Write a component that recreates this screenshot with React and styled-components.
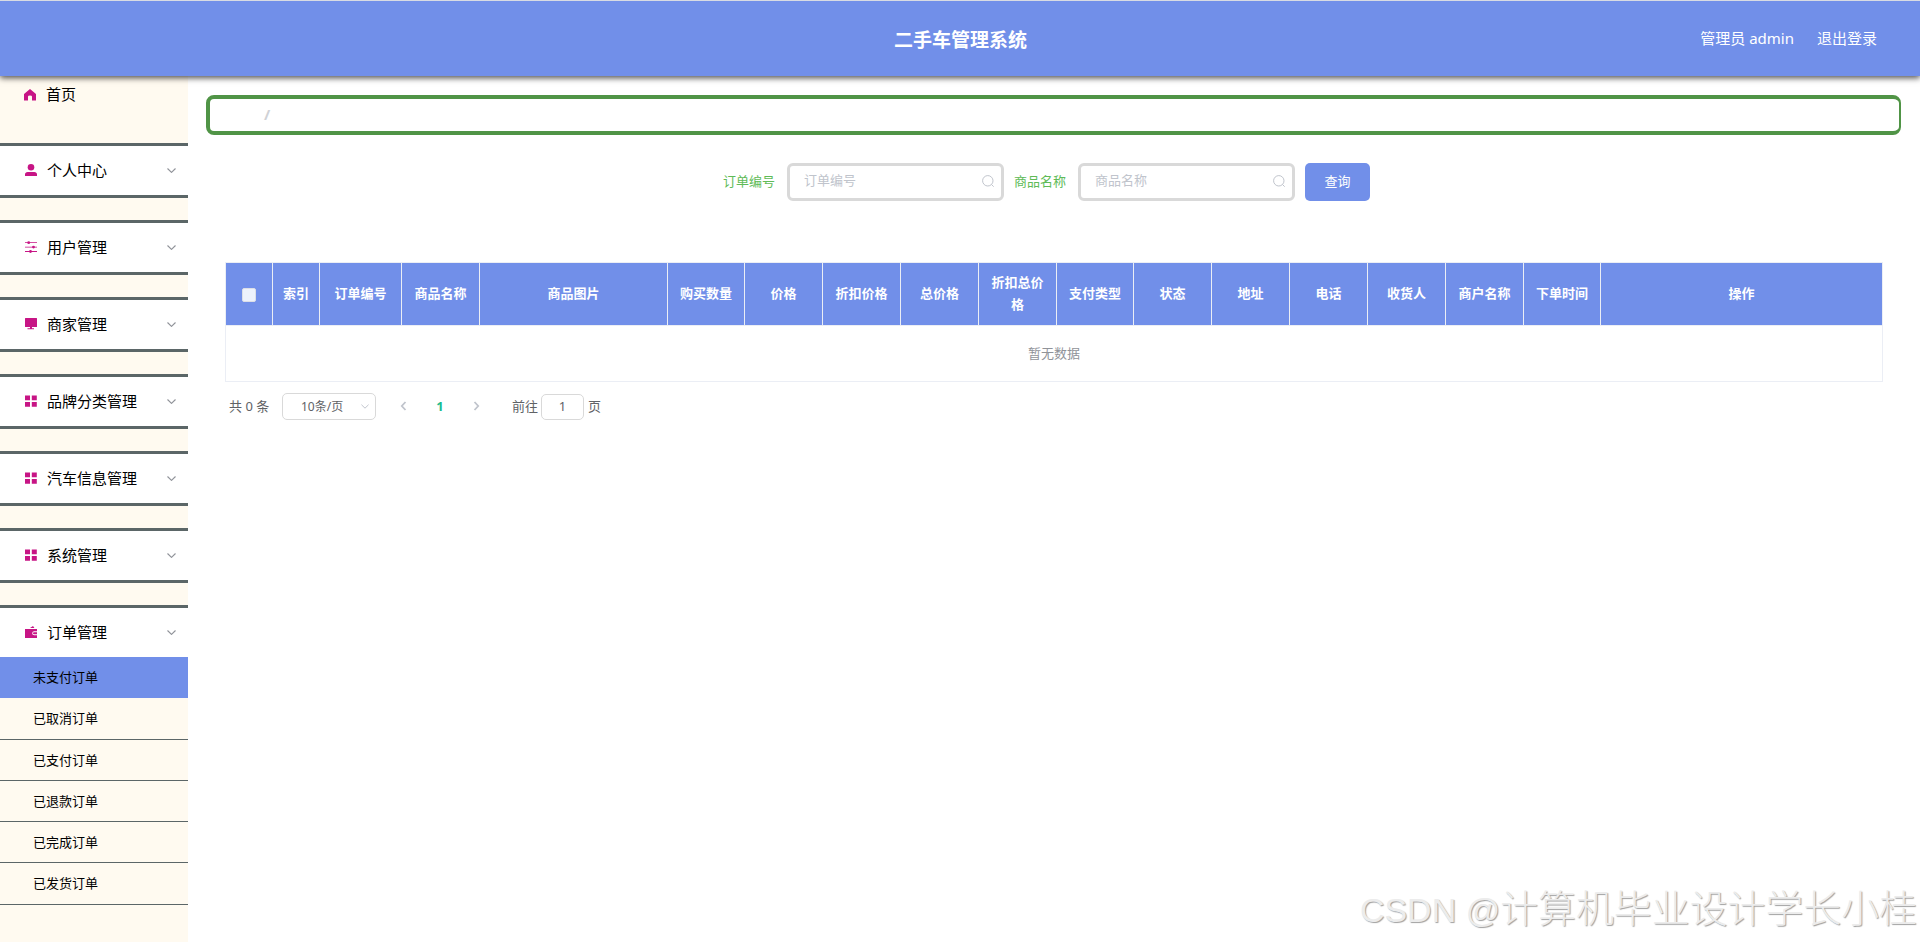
import React, { useState } from 'react';
import styled, { createGlobalStyle } from 'styled-components';

const GlobalStyle = createGlobalStyle`
  * {
    box-sizing: border-box;
  }

  body {
    margin: 0;
    background: #fff;
    font-family: 'Noto Sans', 'Noto Sans CJK SC', sans-serif;
    overflow: hidden;
  }

  input, button {
    font-family: inherit;
  }
`;

const Page = styled.div`
  height: 942px;
  display: flex;
  flex-direction: column;
  overflow: hidden;
`;

const Header = styled.header`
  flex: none;
  height: 76px;
  display: grid;
  grid-template-columns: 1fr auto 1fr;
  align-items: center;
  padding: 0 43px 0 44px;
  border-top: 1px solid #d8dbe3;
  background: #718fe9;
  color: #fff;
  box-shadow: 0 2px 6px rgba(0, 0, 0, 0.7);
  z-index: 1;
`;

const Title = styled.h1`
  grid-column: 2;
  margin: 0;
  padding-top: 2px;
  font-size: 19px;
  line-height: 30px;
  font-weight: 700;
`;

const UserBar = styled.div`
  display: flex;
  justify-content: flex-end;
  gap: 23px;
  font-size: 15px;
  line-height: 24px;
  padding-bottom: 2px;
`;

const Body = styled.div`
  flex: 1;
  display: flex;
  min-height: 0;
`;

const Sidebar = styled.nav`
  flex: none;
  width: 188px;
  background: #fffaf0;
  color: #000;
`;

const HomeItem = styled.div`
  height: 67px;
  padding: 6px 0 0 24px;
  display: flex;
  align-items: flex-start;
  gap: 10px;
  font-size: 15px;
  line-height: 24px;

  svg {
    margin-top: 7px;
  }
`;

const MenuItem = styled.div`
  height: ${(props) => (props.$open ? '52px' : '55px')};
  margin-bottom: ${(props) => (props.$open ? '0' : '22px')};
  padding: 0 12px 1px 25px;
  display: flex;
  align-items: center;
  border-top: 3px solid #5b6667;
  border-bottom: ${(props) => (props.$open ? 'none' : '3px solid #5b6667')};
  background: #fff;
  font-size: 15px;
  line-height: 24px;
  cursor: pointer;
`;

const MenuLabel = styled.span`
  flex: 1;
  padding-left: 10px;
`;

const SubItem = styled.div`
  height: ${(props) => props.$height}px;
  padding: 0 0 2px 33px;
  display: flex;
  align-items: center;
  font-size: 13px;
  color: #000;
  background: ${(props) => (props.$active ? '#718fe9' : 'transparent')};
  border-bottom: ${(props) => (props.$active ? 'none' : '1px solid #5b6667')};
  cursor: pointer;
`;

const Main = styled.main`
  flex: 1;
  min-width: 0;
  padding: 19px 19px 0 18px;
`;

const Breadcrumb = styled.div`
  height: 40px;
  padding: 0 0 2px 54px;
  display: flex;
  align-items: center;
  border: 4px solid #509446;
  border-right-width: 2px;
  border-radius: 8px;
  color: #d0d2d6;
  font-size: 15px;
  font-weight: 700;
`;

const Content = styled.section`
  padding: 28px 18px 0 19px;
`;

const SearchBar = styled.div`
  display: flex;
  align-items: center;
  height: 38px;
  padding-left: 498px;
`;

const Field = styled.label`
  display: flex;
  align-items: center;
  margin-right: 10px;
  color: #60bb57;
  font-size: 13px;
`;

const FieldName = styled.span`
  padding-bottom: 3px;
`;

const InputBox = styled.span`
  width: 217px;
  height: 38px;
  margin-left: 12px;
  padding: 0 7px 2px 14px;
  display: flex;
  align-items: center;
  border: 3px solid #d9d9d9;
  border-radius: 6px;
  background: #fff;
`;

const TextInput = styled.input`
  flex: 1;
  min-width: 0;
  padding: 0 0 2px;
  border: none;
  outline: none;
  background: transparent;
  color: #606266;
  font-size: 13px;

  &::placeholder {
    color: #c0c4cc;
  }
`;

const SearchButton = styled.button`
  width: 65px;
  height: 38px;
  padding: 0 0 4px;
  border: none;
  border-radius: 5px;
  background: #718fe9;
  color: #fff;
  font-size: 13px;
  cursor: pointer;
`;

const Table = styled.div`
  margin-top: 61px;
  border: 1px solid #ebeef5;
`;

const HeadRow = styled.div`
  height: 63px;
  display: grid;
  grid-template-columns: ${(props) => props.$columns};
  border-bottom: 1px solid #ebeef5;
`;

const HeadCell = styled.div`
  display: flex;
  align-items: center;
  justify-content: center;
  padding: 0 10px 2px;
  border-right: 1px solid #ebeef5;
  background: #718fe9;
  color: #fff;
  font-size: 13px;
  font-weight: 700;
  line-height: 22px;
  text-align: center;

  &:last-child {
    border-right: none;
  }
`;

const Checkbox = styled.span`
  width: 14px;
  height: 14px;
  margin-top: 3px;
  border: 1px solid #dcdfe6;
  border-radius: 2px;
  background: #edf2fc;
`;

const EmptyRow = styled.div`
  height: 55px;
  padding-bottom: 2px;
  display: flex;
  align-items: center;
  justify-content: center;
  color: #909399;
  font-size: 13px;
`;

const Pagination = styled.div`
  display: flex;
  align-items: center;
  height: 28px;
  margin-top: 11px;
  padding-left: 4px;
  color: #606266;
  font-size: 13px;
`;

const Total = styled.span`
  width: 53px;
  padding-bottom: 3px;
`;

const SizeSelect = styled.div`
  width: 94px;
  height: 27px;
  margin-bottom: 1px;
  padding: 0 6px 1px 18px;
  display: flex;
  align-items: center;
  justify-content: space-between;
  border: 1px solid #d9d9d9;
  border-radius: 5px;
  font-size: 12px;
`;

const Pager = styled.div`
  width: 136px;
  padding: 0 32px 2px 24px;
  display: flex;
  align-items: center;
  justify-content: space-between;
  color: #1bbc8f;
  font-weight: 700;
`;

const JumpText = styled.span`
  padding-bottom: 3px;
`;

const JumpInput = styled.input`
  width: 43px;
  height: 26px;
  margin: 0 4px 0 3px;
  padding: 0 0 2px;
  border: 1px solid #d9d9d9;
  border-radius: 5px;
  outline: none;
  color: #606266;
  font-size: 13px;
  text-align: center;
`;

const Watermark = styled.div`
  position: absolute;
  right: 3px;
  bottom: 9px;
  height: 54px;
  line-height: 54px;
  color: #ececec;
  font-family: 'Noto Sans CJK SC', sans-serif;
  font-size: 37.9px;
  font-weight: 300;
  white-space: pre;
  text-shadow: 1px 1px 1px #a0a0a0;
  z-index: 2;

  span {
    font-family: 'Liberation Sans', sans-serif;
    font-size: 34px;
  }
`;

const icons = {
  home: <path d="M6 0 12 5V11.5H8V7.5Q8 6.5 6 6.5T4 7.5V11.5H0V5Z" />,
  user: (
    <>
      <circle cx="6" cy="3.3" r="3.3" />
      <path d="M3.2 8h5.6A3 3 0 0 1 12 12H0A3 3 0 0 1 3.2 8Z" />
    </>
  ),
  sliders: (
    <>
      <path d="M0 1.3h12v.8H0zM0 5.7h12v.8H0zM0 10.1h12v.8H0z" />
      <circle cx="3.7" cy="1.7" r="1.4" />
      <circle cx="8.5" cy="6.1" r="1.4" />
      <circle cx="5.5" cy="10.5" r="1.4" />
    </>
  ),
  monitor: <path d="M.5 0h11q.5 0 .5.5V8.5q0 .5-.5.5H.5Q0 9 0 8.5V.5Q0 0 .5 0ZM5 9h2v1.2h2V11.3H2.5v-1.1H5Z" />,
  grid: <path d="M0 .5h5v4.8H0zM6.8.5h5v4.8h-5zM0 7h5v4.8H0zM6.8 7h5v4.8h-5z" />,
  wallet: (
    <path
      fillRule="evenodd"
      d="M0 3h12v2.2H9.2a2 2 0 0 0 0 4H12V12H0ZM5 2 8 0l1.4 2ZM9 6.2h3v2H9a1 1 0 0 1 0-2Z"
    />
  ),
};

const MenuIcon = ({ name }) => (
  <svg width="12" height="12" viewBox="0 0 12 12" fill="#c71585">
    {icons[name]}
  </svg>
);

const Arrow = ({ color = '#909399', size = 9 }) => (
  <svg width={size} height="5" viewBox="0 0 9 5" fill="none" stroke={color} strokeWidth="1.1">
    <path d="M.5.5 4.5 4.4 8.5.5" />
  </svg>
);

const PageArrow = ({ d }) => (
  <svg width="7" height="10" viewBox="0 0 7 10" fill="none" stroke="#c0c4cc" strokeWidth="1.8">
    <path d={d} />
  </svg>
);

const SearchIcon = () => (
  <svg width="12" height="12" viewBox="0 0 12 12" fill="none" stroke="#c0c4cc">
    <circle cx="5.8" cy="5.8" r="5.2" />
    <path d="m9.4 9.4 2.3 2.3" />
  </svg>
);

const menu = [
  { label: '个人中心', icon: 'user' },
  { label: '用户管理', icon: 'sliders' },
  { label: '商家管理', icon: 'monitor' },
  { label: '品牌分类管理', icon: 'grid' },
  { label: '汽车信息管理', icon: 'grid' },
  { label: '系统管理', icon: 'grid' },
  { label: '订单管理', icon: 'wallet', open: true },
];

const orders = [
  { label: '未支付订单', height: 41 },
  { label: '已取消订单', height: 42 },
  { label: '已支付订单', height: 41 },
  { label: '已退款订单', height: 41 },
  { label: '已完成订单', height: 41 },
  { label: '已发货订单', height: 42 },
];

const columns = [
  { label: '索引', width: 47 },
  { label: '订单编号', width: 82 },
  { label: '商品名称', width: 78 },
  { label: '商品图片', width: 188 },
  { label: '购买数量', width: 77 },
  { label: '价格', width: 78 },
  { label: '折扣价格', width: 78 },
  { label: '总价格', width: 78 },
  { label: '折扣总价格', width: 78 },
  { label: '支付类型', width: 77 },
  { label: '状态', width: 78 },
  { label: '地址', width: 78 },
  { label: '电话', width: 78 },
  { label: '收货人', width: 78 },
  { label: '商户名称', width: 78 },
  { label: '下单时间', width: 77 },
];

const template = `47px ${columns.map((column) => `${column.width}px`).join(' ')} 1fr`;

const App = () => {
  const [active, setActive] = useState('未支付订单');
  const [orderNo, setOrderNo] = useState('');
  const [goodsName, setGoodsName] = useState('');
  const [page, setPage] = useState('1');

  return (
    <Page>
      <GlobalStyle />
      <Header>
        <Title>二手车管理系统</Title>
        <UserBar>
          <span>管理员 admin</span>
          <span>退出登录</span>
        </UserBar>
      </Header>

      <Body>
        <Sidebar>
          <HomeItem>
            <MenuIcon name="home" />
            首页
          </HomeItem>
          {menu.map((item) => (
            <MenuItem key={item.label} $open={item.open}>
              <MenuIcon name={item.icon} />
              <MenuLabel>{item.label}</MenuLabel>
              <Arrow />
            </MenuItem>
          ))}
          {orders.map((item) => (
            <SubItem
              key={item.label}
              $height={item.height}
              $active={item.label === active}
              onClick={() => setActive(item.label)}
            >
              {item.label}
            </SubItem>
          ))}
        </Sidebar>

        <Main>
          <Breadcrumb>/</Breadcrumb>
          <Content>
            <SearchBar>
              <Field>
                <FieldName>订单编号</FieldName>
                <InputBox>
                  <TextInput value={orderNo} onChange={(e) => setOrderNo(e.target.value)} placeholder="订单编号" />
                  <SearchIcon />
                </InputBox>
              </Field>
              <Field>
                <FieldName>商品名称</FieldName>
                <InputBox>
                  <TextInput value={goodsName} onChange={(e) => setGoodsName(e.target.value)} placeholder="商品名称" />
                  <SearchIcon />
                </InputBox>
              </Field>
              <SearchButton>查询</SearchButton>
            </SearchBar>

            <Table>
              <HeadRow $columns={template}>
                <HeadCell>
                  <Checkbox />
                </HeadCell>
                {columns.map((column) => (
                  <HeadCell key={column.label}>{column.label}</HeadCell>
                ))}
                <HeadCell>操作</HeadCell>
              </HeadRow>
              <EmptyRow>暂无数据</EmptyRow>
            </Table>

            <Pagination>
              <Total>共 0 条</Total>
              <SizeSelect>
                10条/页
                <Arrow color="#c0c4cc" size={8} />
              </SizeSelect>
              <Pager>
                <PageArrow d="M5.5 1 1.8 5l3.7 4" />
                <span>1</span>
                <PageArrow d="M1.5 1 5.2 5 1.5 9" />
              </Pager>
              <JumpText>前往</JumpText>
              <JumpInput value={page} onChange={(e) => setPage(e.target.value)} />
              <JumpText>页</JumpText>
            </Pagination>
          </Content>
        </Main>
      </Body>

      <Watermark>
        <span>CSDN @</span>计算机毕业设计学长小桂
      </Watermark>
    </Page>
  );
};

export default App;
